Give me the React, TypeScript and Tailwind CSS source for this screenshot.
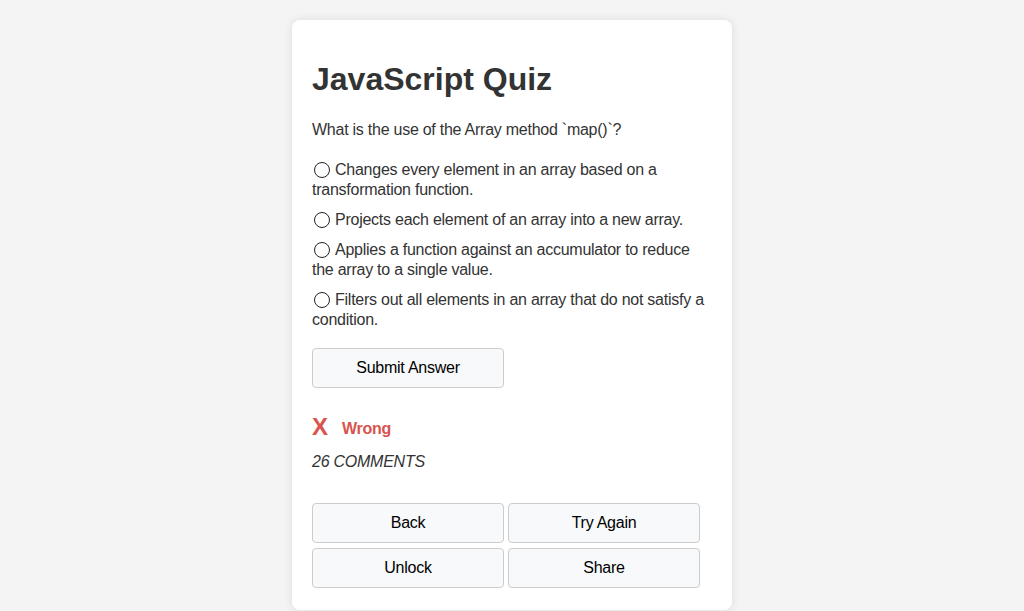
const options = [
  "Changes every element in an array based on a transformation function.",
  "Projects each element of an array into a new array.",
  "Applies a function against an accumulator to reduce the array to a single value.",
  "Filters out all elements in an array that do not satisfy a condition.",
];

const btn =
  "h-10 rounded border border-[#ccc] bg-[#f8f9fa] text-base tracking-[-0.25px] text-black";

export default function App() {
  return (
    <div className="min-h-screen bg-[#f4f4f4] pt-5 font-['Liberation_Sans',Arial,sans-serif] text-[#333]">
      <div className="mx-auto w-[440px] rounded-lg bg-white px-5 pt-5 pb-[22px] shadow-[0_0_10px_rgba(0,0,0,0.1)]">
        <h1 className="mt-[21px] mb-[22px] text-[32px] font-bold leading-[37px]">JavaScript Quiz</h1>
        <p className="mb-5 text-base leading-5 tracking-[-0.25px]">What is the use of the Array method `map()`?</p>
        <div className="flex flex-col gap-[10px]">
          {options.map((o) => (
            <label key={o} className="block text-base leading-5 tracking-[-0.25px]">
              <span className="mr-[5px] ml-[2px] inline-block h-[16px] w-[16px] rounded-full border border-[#222] align-[-3px]" />
              {o}
            </label>
          ))}
        </div>
        <button className={`${btn} mt-[18px] w-[192px]`}>Submit Answer</button>
        <div className="mt-[25px] flex items-center">
          <span className="text-2xl font-bold leading-7 text-[#d9534f]">X</span>
          <span className="ml-[14px] mt-[4px] text-base font-bold tracking-[-0.25px] text-[#d9534f]">Wrong</span>
        </div>
        <p className="mt-[11px] text-base italic leading-5 tracking-[-0.25px]">26 COMMENTS</p>
        <div className="mt-[31px] grid w-[388px] grid-cols-2 gap-x-1 gap-y-[5px]">
          <button className={btn}>Back</button>
          <button className={btn}>Try Again</button>
          <button className={btn}>Unlock</button>
          <button className={btn}>Share</button>
        </div>
      </div>
    </div>
  );
}
